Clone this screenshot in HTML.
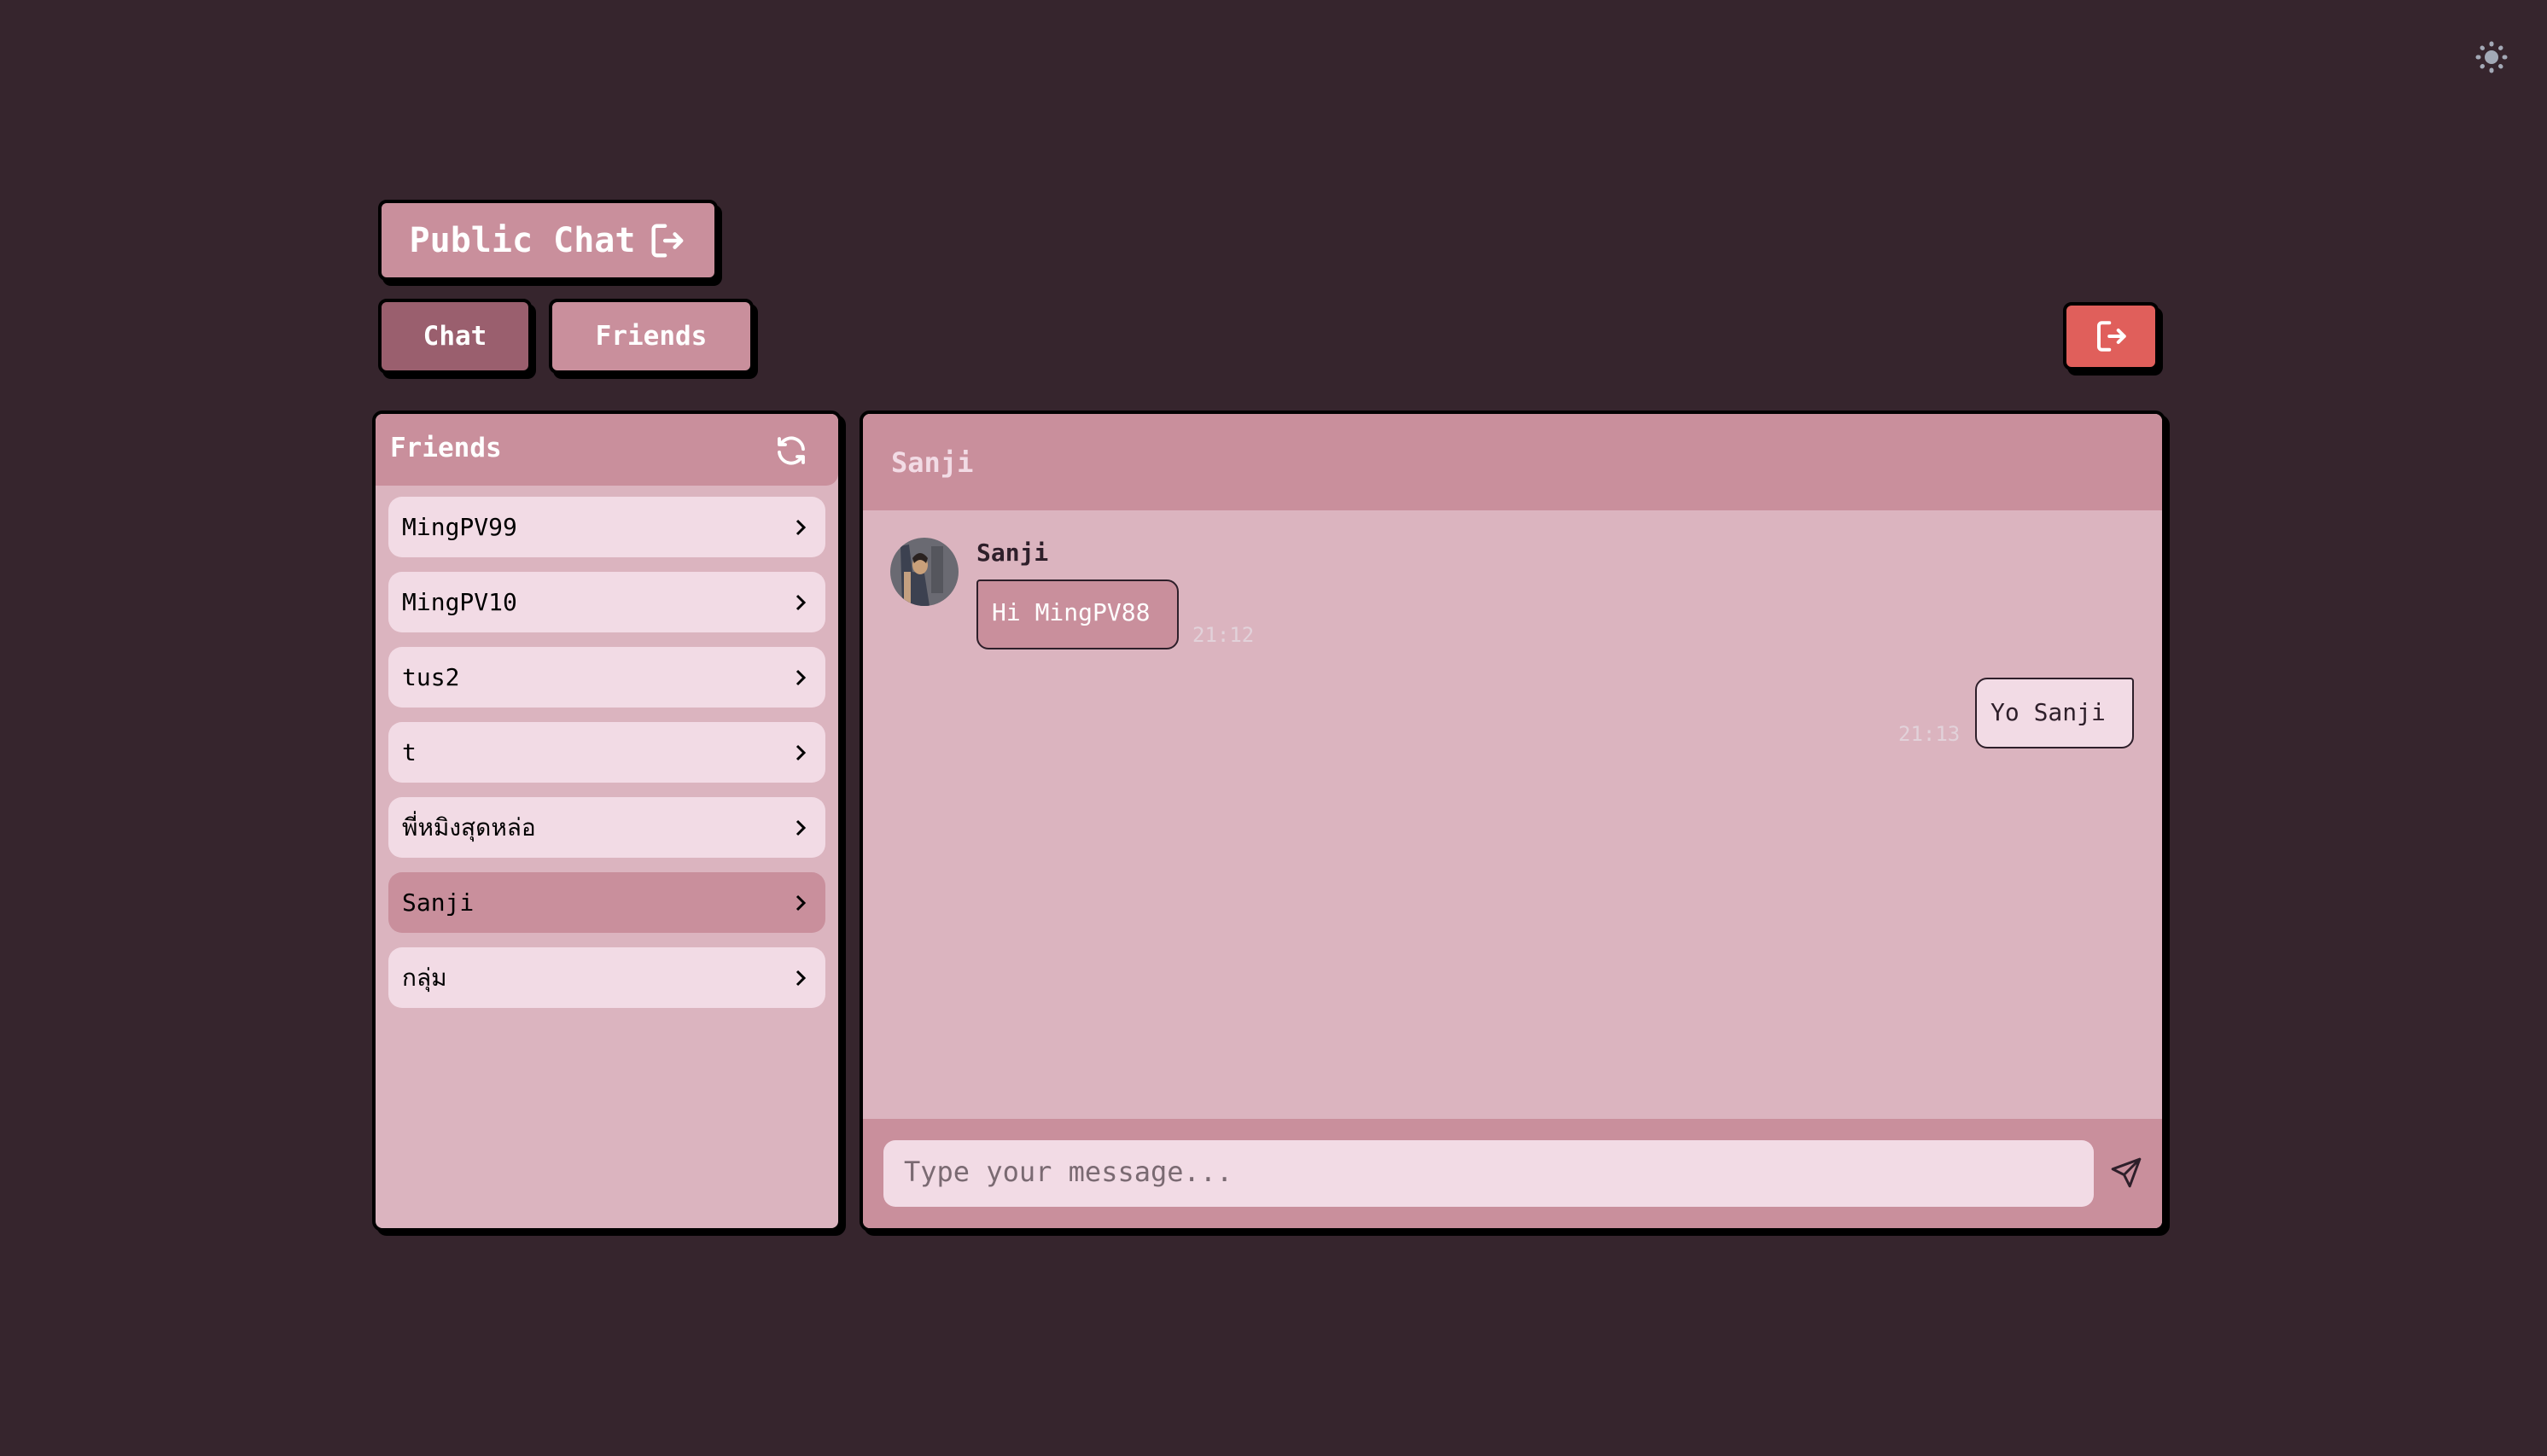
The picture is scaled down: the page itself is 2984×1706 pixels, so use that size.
<!DOCTYPE html>
<html><head><meta charset="utf-8"><style>
*{box-sizing:border-box;margin:0;padding:0}
body{width:2984px;height:1706px;background:#36252d;position:relative;overflow:hidden;font-family:"DejaVu Sans Mono","Liberation Mono",monospace}
.a{position:absolute}
.btn{position:absolute;border:4px solid #000;border-radius:10px;box-shadow:5px 6px 0 #000;color:#fff;font-weight:bold;display:flex;align-items:center;justify-content:center}
.item{position:absolute;left:455px;width:512px;height:71px;background:#f2dbe5;border-radius:16px;font-size:28px;color:#000;display:flex;align-items:center;padding-left:16px}
.item svg{position:absolute;right:18px;top:24px}
</style></head><body>
<svg class="a" style="left:2896px;top:44px" width="46" height="46" viewBox="0 0 46 46" fill="#a3a9b6"><circle cx="23" cy="23" r="8"/><g stroke="#a3a9b6" stroke-width="5" stroke-linecap="round"><line x1="23" y1="7" x2="23" y2="8"/><line x1="23" y1="38" x2="23" y2="39"/><line x1="7" y1="23" x2="8" y2="23"/><line x1="38" y1="23" x2="39" y2="23"/><line x1="12" y1="12" x2="12.5" y2="12.5"/><line x1="33.5" y1="33.5" x2="34" y2="34"/><line x1="12" y1="34" x2="12.5" y2="33.5"/><line x1="33.5" y1="12.5" x2="34" y2="12"/></g></svg>

<div class="btn" style="left:443px;top:234px;width:398px;height:95px;background:#c98f9c;font-size:40px;gap:14px">Public Chat<svg width="46" height="46" viewBox="0 0 24 24" fill="none" stroke="#fff" stroke-width="2.3" stroke-linecap="round" stroke-linejoin="round"><path d="M11 3H6a2 2 0 0 0-2 2v14a2 2 0 0 0 2 2h5M11 12h10M17 8l4 4-4 4"/></svg></div>
<div class="btn" style="left:443px;top:350px;width:180px;height:88px;background:#9a5f6e;font-size:31px">Chat</div>
<div class="btn" style="left:643px;top:350px;width:240px;height:88px;background:#c98f9c;font-size:31px">Friends</div>
<div class="btn" style="left:2417px;top:354px;width:112px;height:80px;background:#e05f5b"><svg width="42" height="42" viewBox="0 0 24 24" fill="none" stroke="#fff" stroke-width="2.3" stroke-linecap="round" stroke-linejoin="round"><path d="M11 3H6a2 2 0 0 0-2 2v14a2 2 0 0 0 2 2h5M11 12h10M17 8l4 4-4 4"/></svg></div>

<div class="a" style="left:436px;top:481px;width:550px;height:962px;background:#dbb4bf;border:4px solid #000;border-radius:12px;box-shadow:5px 5px 0 #000;overflow:hidden">
 <div class="a" style="left:0;top:0;width:542px;height:84px;background:#c98f9c;border-radius:0 0 14px 0"></div>
 <div class="a" style="left:17px;top:22px;font-size:31px;font-weight:bold;color:#fff">Friends</div>
 <svg class="a" style="left:466px;top:22px" width="42" height="42" viewBox="0 0 24 24" fill="none" stroke="#fff" stroke-width="2.2" stroke-linecap="round" stroke-linejoin="round"><path d="M20 11A8 8 0 0 0 5.5 7M4 4v4h4M4 13a8 8 0 0 0 14.5 4M20 20v-4h-4"/></svg>
</div>
<div class="item" style="top:582px">MingPV99<svg width="22" height="24" viewBox="0 0 22 24" fill="none" stroke="#000" stroke-width="3"><path d="M7 4l8 8-8 8"/></svg></div>
<div class="item" style="top:670px">MingPV10<svg width="22" height="24" viewBox="0 0 22 24" fill="none" stroke="#000" stroke-width="3"><path d="M7 4l8 8-8 8"/></svg></div>
<div class="item" style="top:758px">tus2<svg width="22" height="24" viewBox="0 0 22 24" fill="none" stroke="#000" stroke-width="3"><path d="M7 4l8 8-8 8"/></svg></div>
<div class="item" style="top:846px">t<svg width="22" height="24" viewBox="0 0 22 24" fill="none" stroke="#000" stroke-width="3"><path d="M7 4l8 8-8 8"/></svg></div>
<div class="item" style="top:934px">พี่หมิงสุดหล่อ<svg width="22" height="24" viewBox="0 0 22 24" fill="none" stroke="#000" stroke-width="3"><path d="M7 4l8 8-8 8"/></svg></div>
<div class="item" style="top:1022px;background:#c98f9c">Sanji<svg width="22" height="24" viewBox="0 0 22 24" fill="none" stroke="#000" stroke-width="3"><path d="M7 4l8 8-8 8"/></svg></div>
<div class="item" style="top:1110px">กลุ่ม<svg width="22" height="24" viewBox="0 0 22 24" fill="none" stroke="#000" stroke-width="3"><path d="M7 4l8 8-8 8"/></svg></div>

<div class="a" style="left:1007px;top:481px;width:1530px;height:962px;background:#dbb4bf;border:4px solid #000;border-radius:12px;box-shadow:5px 5px 0 #000;overflow:hidden">
 <div class="a" style="left:0;top:0;width:100%;height:113px;background:#c98f9c"></div>
 <div class="a" style="left:33px;top:38px;font-size:32px;font-weight:bold;color:#f2dbe5">Sanji</div>
 <div class="a" style="left:0;top:826px;width:100%;height:140px;background:#c98f9c"></div>
 <div class="a" style="left:24px;top:851px;width:1418px;height:78px;background:#f2dbe5;border-radius:14px;font-size:32px;color:#7a6a72;padding:18px 0 0 24px">Type your message...</div>
 <svg class="a" style="left:1460px;top:869px" width="40" height="40" viewBox="0 0 24 24" fill="none" stroke="#2e1f2a" stroke-width="1.8" stroke-linejoin="round"><path d="M21.5 2.5L2.5 9.5l8 4zM21.5 2.5L14.5 21.5l-4-8zM21.5 2.5l-11 11"/></svg>
</div>
<svg class="a" style="left:1043px;top:630px" width="80" height="80" viewBox="0 0 80 80"><defs><clipPath id="c"><circle cx="40" cy="40" r="40"/></clipPath></defs><g clip-path="url(#c)"><rect width="80" height="80" fill="#6a6a72"/><rect x="48" y="10" width="14" height="55" fill="#55565d"/><path d="M12 10 L22 8 L26 40 L40 42 L46 80 L14 80 Z" fill="#3c4150"/><ellipse cx="35" cy="32" rx="9" ry="11" fill="#c9a07a"/><path d="M26 24 Q35 12 44 24 L42 30 Q35 22 28 30Z" fill="#2a2220"/><rect x="16" y="40" width="8" height="40" fill="#c4a080"/></g></svg>
<div class="a" style="left:1144px;top:631px;font-size:28px;font-weight:bold;color:#2e1f2a">Sanji</div>
<div class="a" style="left:1144px;top:679px;width:237px;height:82px;background:#c98f9c;border:2px solid #2e1f2a;border-radius:4px 14px 14px 14px;font-size:28px;color:#fff;padding:20px 0 0 16px">Hi MingPV88</div>
<div class="a" style="left:1397px;top:730px;font-size:24px;color:#e2d2da">21:12</div>
<div class="a" style="left:2314px;top:794px;width:186px;height:83px;background:#f2dbe5;border:2px solid #2e1f2a;border-radius:14px 4px 14px 14px;font-size:28px;color:#2e1f2a;padding:22px 0 0 16px">Yo Sanji</div>
<div class="a" style="left:2224px;top:846px;font-size:24px;color:#e2d2da">21:13</div>
</body></html>
